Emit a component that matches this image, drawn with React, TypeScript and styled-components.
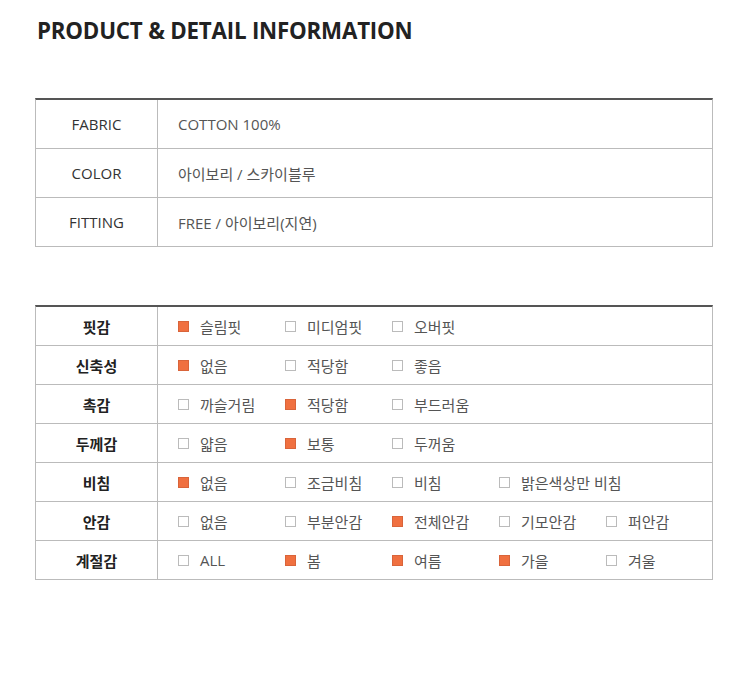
import React from "react";
import styled, { createGlobalStyle } from "styled-components";

const GlobalStyle = createGlobalStyle`
  body {
    margin: 0;
    background: #fff;
    font-family: "Open Sans", "Noto Sans CJK KR", sans-serif;
  }
`;

const Page = styled.div`
  padding: 17px 37px 0 35px;
  width: 678px;
`;

const Title = styled.h2`
  margin: 0 0 53px 2px;
  font-size: 22.3px;
  font-weight: 700;
  color: #222;
  letter-spacing: -0.2px;
  line-height: 28px;
`;

const Table = styled.div<{ $gap?: number }>`
  border-top: 2px solid #555;
  border-left: 1px solid #bbb;
  border-right: 1px solid #bbb;
  margin-bottom: ${(p) => p.$gap ?? 0}px;
`;

const Row = styled.div<{ $h: number }>`
  display: flex;
  height: ${(p) => p.$h}px;
  border-bottom: 1px solid #bbb;
`;

const Label = styled.div<{ $bold?: boolean }>`
  width: 121px;
  flex: none;
  border-right: 1px solid #bbb;
  display: flex;
  align-items: center;
  justify-content: center;
  font-size: 15px;
  font-weight: ${(p) => (p.$bold ? 700 : 400)};
  color: ${(p) => (p.$bold ? "#222" : "#333")};
`;

const Value = styled.div`
  flex: 1;
  display: flex;
  align-items: center;
  padding-left: 20px;
  font-size: 15px;
  color: #555;
`;

const Option = styled.div`
  width: 107px;
  flex: none;
  display: flex;
  align-items: center;
  gap: 11px;
  font-size: 15px;
  color: #555;
  white-space: nowrap;
`;

const Box = styled.span<{ $on: boolean }>`
  width: 9px;
  height: 9px;
  flex: none;
  border: 1px solid ${(p) => (p.$on ? "#d9643a" : "#bbb")};
  background: ${(p) => (p.$on ? "#f07040" : "#fff")};
`;

const info: [string, string][] = [
  ["FABRIC", "COTTON 100%"],
  ["COLOR", "아이보리 / 스카이블루"],
  ["FITTING", "FREE / 아이보리(지연)"],
];

const details: { label: string; opts: [string, boolean][] }[] = [
  { label: "핏감", opts: [["슬림핏", true], ["미디엄핏", false], ["오버핏", false]] },
  { label: "신축성", opts: [["없음", true], ["적당함", false], ["좋음", false]] },
  { label: "촉감", opts: [["까슬거림", false], ["적당함", true], ["부드러움", false]] },
  { label: "두께감", opts: [["얇음", false], ["보통", true], ["두꺼움", false]] },
  {
    label: "비침",
    opts: [["없음", true], ["조금비침", false], ["비침", false], ["밝은색상만 비침", false]],
  },
  {
    label: "안감",
    opts: [["없음", false], ["부분안감", false], ["전체안감", true], ["기모안감", false], ["퍼안감", false]],
  },
  {
    label: "계절감",
    opts: [["ALL", false], ["봄", true], ["여름", true], ["가을", true], ["겨울", false]],
  },
];

const App: React.FC = () => {
  return (
    <Page>
      <GlobalStyle />
      <Title>PRODUCT &amp; DETAIL INFORMATION</Title>
      <Table $gap={58}>
        {info.map(([k, v]) => (
          <Row key={k} $h={48}>
            <Label>{k}</Label>
            <Value>{v}</Value>
          </Row>
        ))}
      </Table>
      <Table>
        {details.map((d) => (
          <Row key={d.label} $h={38}>
            <Label $bold>{d.label}</Label>
            <Value>
              {d.opts.map(([name, on]) => (
                <Option key={name}>
                  <Box $on={on} />
                  {name}
                </Option>
              ))}
            </Value>
          </Row>
        ))}
      </Table>
    </Page>
  );
};

export default App;
